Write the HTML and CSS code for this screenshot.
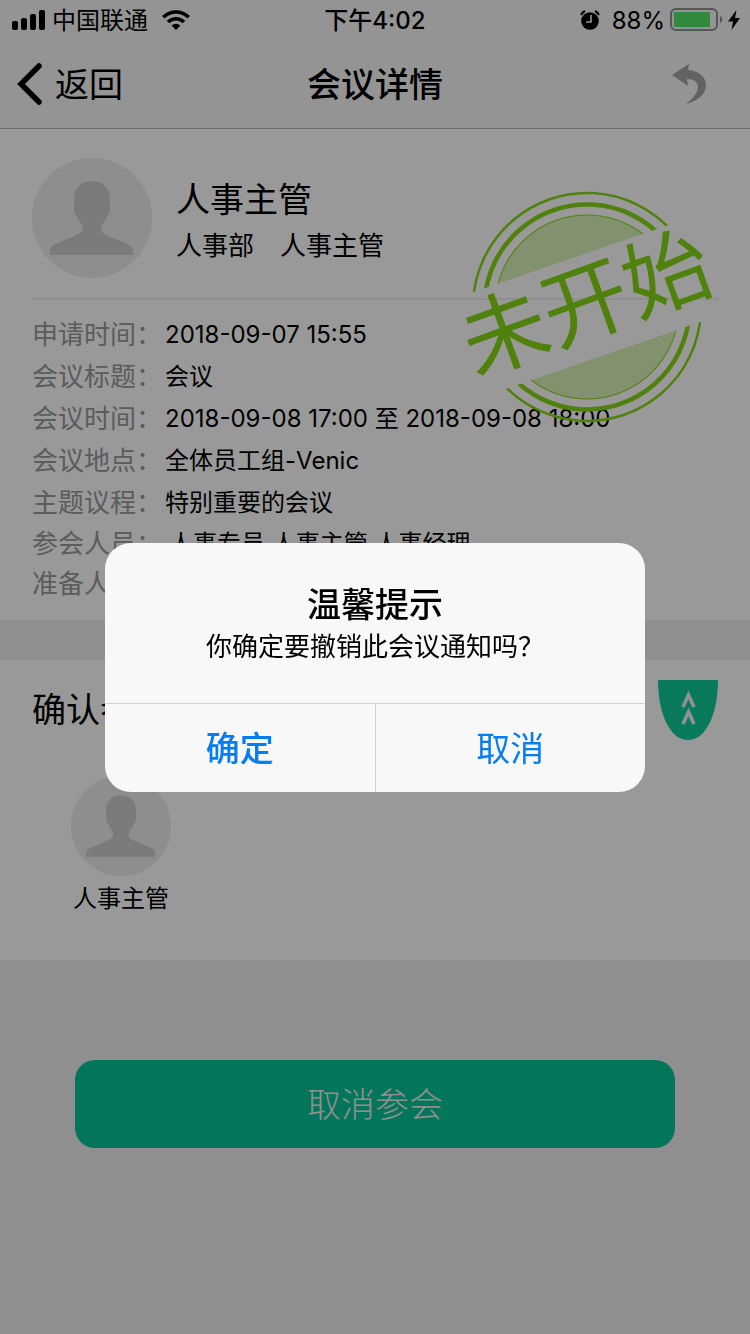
FILE: index.html
```html
<!DOCTYPE html>
<html lang="zh-CN">
<head>
  <meta charset="UTF-8" />
  <meta name="viewport" content="width=device-width, initial-scale=1.0" />
  <title>会议详情</title>
  <link rel="stylesheet" href="styles.css">
</head>
<body>

  <svg width="0" height="0" class="sprite" aria-hidden="true">
    <symbol id="person" viewBox="0 0 120 120">
      <path d="M60 23c11 0 18 7 18 18v10c0 4-1 6-3 7-1 4-3 6-5 9-1 4-1 6 1 8 8 5 20 8 28 13 2 2 2 4 2 9H18c0-5 0-7 2-9 8-5 20-8 28-13 3-2 3-4 2-8-2-3-4-5-5-9-2-1-3-3-3-7V41c0-11 7-18 18-18z" />
    </symbol>
  </svg>

  <div class="status-bar">
    <div class="status-left">
      <svg width="34" height="20" viewBox="0 0 34 20">
        <rect x="0" y="11" width="6" height="9" rx="2" />
        <rect x="9" y="8" width="6" height="12" rx="2" />
        <rect x="18" y="4" width="6" height="16" rx="2" />
        <rect x="27" y="0" width="6" height="20" rx="2" />
      </svg>
      <span class="carrier">中国联通</span>
      <svg width="28" height="20" viewBox="0 0 28 20" fill="none" stroke="#000" stroke-width="3.6">
        <path d="M1.3 7.2a18 18 0 0 1 25.4 0" />
        <path d="M6 12a11.3 11.3 0 0 1 16 0" />
        <path d="M14 20l-4.4-4.5a6.2 6.2 0 0 1 8.8 0z" fill="#000" stroke="none" />
      </svg>
    </div>
    <span class="clock">下午4:02</span>
    <div class="status-right">
      <svg width="20" height="20" viewBox="0 0 20 20">
        <circle cx="10" cy="11" r="8.8" />
        <path d="M1 5A9 9 0 0 1 5 1M15 1a9 9 0 0 1 4 4" fill="none" stroke="#000" stroke-width="2" />
        <path d="M11 5v7H6" fill="none" stroke="#f7f7f7" stroke-width="1.6" />
      </svg>
      <span class="percent">88%</span>
      <svg width="54" height="24" viewBox="0 0 54 24">
        <rect x="1" y="1" width="46" height="21" rx="5" fill="none" stroke="#8f8f8f" stroke-width="2" />
        <rect x="4" y="4" width="36" height="15" rx="1" fill="#52e466" />
        <path d="M50 8c3 1 3 6 0 7z" fill="#8f8f8f" />
      </svg>
      <svg width="12" height="20" viewBox="0 0 12 20"><path d="M8.500 0L0 11.500h5L3.500 20 12 8H7z" /></svg>
    </div>
  </div>

  <header class="nav-bar">
    <button class="back-btn" type="button">
      <svg width="26" height="42" viewBox="0 0 26 42" fill="none" stroke="#000" stroke-width="5.500" stroke-linecap="round" stroke-linejoin="miter">
        <path d="M22 3L4 21l18 18" />
      </svg>
      <span>返回</span>
    </button>
    <h1>会议详情</h1>
    <button class="undo-btn" type="button" aria-label="撤销">
      <svg width="36" height="42" viewBox="0 0 36 42" fill="#a3a3a3">
        <path d="M0 12L17 1l-1 6c11 1 18 7 18 15 0 9-8 16-20 19 7-6 12-11 12-17 0-5-4-8-11-8l1 7z" />
      </svg>
    </button>
  </header>

  <main>
    <section class="detail">
      <div class="profile">
        <div class="avatar"><svg><use href="#person" /></svg></div>
        <div class="profile-text">
          <h2>人事主管</h2>
          <p><span>人事部</span><span>人事主管</span></p>
        </div>
      </div>

      <dl class="info">
        <dt>申请时间：</dt><dd>2018-09-07 15:55</dd>
        <dt>会议标题：</dt><dd>会议</dd>
        <dt>会议时间：</dt><dd>2018-09-08 17:00 至 2018-09-08 18:00</dd>
        <dt>会议地点：</dt><dd>全体员工组-Venic</dd>
        <dt>主题议程：</dt><dd>特别重要的会议</dd>
        <dt class="people">参会人员：</dt><dd class="people">人事专员 人事主管 人事经理</dd>
        <dt class="people">准备人员：</dt><dd class="people"></dd>
      </dl>

      <!-- status stamp -->
      <svg class="stamp" width="300" height="260" viewBox="-150 -130 300 260">
        <defs>
          <clipPath id="band">
            <rect x="-130" y="-130" width="260" height="79" />
            <rect x="-130" y="51" width="260" height="79" />
          </clipPath>
        </defs>
        <g clip-path="url(#band)" transform="rotate(-19)" fill="none" stroke="#84d714">
          <circle r="114" stroke-width="2.500" />
          <circle r="102.500" stroke-width="4.500" />
          <circle r="92" fill="#84d714" fill-opacity="0.3" stroke-width="1" />
        </g>
        <text x="0" y="27" text-anchor="middle" transform="rotate(-20)">未开始</text>
      </svg>
    </section>

    <section class="members">
      <div class="members-head">
        <h2>确认参会</h2>
        <button class="fold-btn" type="button" aria-label="收起">
          <svg width="60" height="60" viewBox="0 0 60 60">
            <path d="M0 0h60C60 34 48 60 30 60S0 34 0 0z" fill="#12cc9b" />
            <path d="M25 27l5.500-12L36 27M25 44l5.500-12L36 44" fill="none" stroke="#f4f4f4" stroke-width="3.500" />
          </svg>
        </button>
      </div>
      <ul class="member-list">
        <li>
          <div class="avatar small"><svg><use href="#person" /></svg></div>
          <span>人事主管</span>
        </li>
      </ul>
    </section>

    <button class="cancel-btn" type="button">取消参会</button>
  </main>

  <div class="overlay">
    <div class="alert" role="alertdialog" aria-labelledby="alertTitle" aria-describedby="alertText">
      <div class="alert-body">
        <h3 id="alertTitle">温馨提示</h3>
        <p id="alertText">你确定要撤销此会议通知吗？</p>
      </div>
      <div class="alert-actions">
        <button class="confirm" type="button">确定</button>
        <button type="button">取消</button>
      </div>
    </div>
  </div>

</body>
</html>
```

FILE: styles.css
```css
* {
  margin: 0;
  padding: 0;
  box-sizing: border-box;
}

body {
  background-color: #efefef;
  min-height: 100vh;
  color: #000;
  font-family: Inter, 'Noto Sans CJK SC', sans-serif;
  font-size: 24px;
}

button {
  border: none;
  background: none;
  font-family: inherit;
  color: inherit;
  cursor: pointer;
}

svg {
  display: block;
}

.sprite {
  position: absolute;
}

/* top bars */
.status-bar {
  display: grid;
  grid-template-columns: 1fr auto 1fr;
  align-items: center;
  height: 40px;
  padding: 0 10px;
  background-color: #f7f7f7;
  line-height: 30px;
}

.status-bar span {
  padding-top: 2px;
}

.status-left,
.status-right {
  display: flex;
  align-items: center;
}

.status-left {
  padding-left: 2px;
}

.status-right {
  justify-content: flex-end;
}

.carrier {
  margin: 0 14px 0 6px;
}

.clock {
  font-weight: 500;
}

.percent {
  margin: 0 5px 0 12px;
}

.status-right svg:last-child {
  margin-left: 4px;
}

.nav-bar {
  display: grid;
  grid-template-columns: 1fr auto 1fr;
  align-items: center;
  height: 89px;
  padding: 0 17px;
  background-color: #f7f7f7;
  border-bottom: 1px solid #b2b2b2;
}

.nav-bar h1 {
  padding-bottom: 4px;
  font-size: 34px;
  font-weight: 500;
}

.back-btn {
  display: flex;
  align-items: center;
  gap: 12px;
  font-size: 34px;
}

.back-btn span {
  padding-bottom: 4px;
}

.undo-btn {
  justify-self: end;
  margin-right: 25px;
}

/* meeting detail */
.detail {
  position: relative;
  padding: 29px 32px 16px;
  background-color: #fff;
}

.profile {
  display: flex;
  gap: 24px;
  padding-bottom: 20px;
  border-bottom: 2px solid #efefef;
}

.avatar {
  width: 120px;
  height: 120px;
  border-radius: 50%;
  background-color: #ededed;
}

.avatar svg {
  width: 100%;
  height: 100%;
  fill: #cdcdcd;
}

.profile-text {
  padding-top: 18px;
}

.profile-text h2 {
  font-size: 34px;
  font-weight: 400;
  line-height: 48px;
}

.profile-text p {
  display: flex;
  gap: 26px;
  font-size: 26px;
  line-height: 44px;
}

.info {
  display: grid;
  grid-template-columns: auto 1fr;
  column-gap: 3px;
  padding-top: 14px;
  line-height: 42px;
}

.info dt {
  font-size: 26px;
  color: #999;
}

.info .people {
  line-height: 40px;
}

.info dd.people {
  padding-left: 4px;
}

.stamp {
  position: absolute;
  top: 48px;
  right: 13px;
}

.stamp text {
  font-family: 'Noto Sans CJK SC', sans-serif;
  font-size: 86px;
  fill: #84d714;
}

/* confirmed members */
.members {
  margin-top: 40px;
  padding: 20px 32px 44px;
  background-color: #fff;
}

.members-head {
  display: flex;
  justify-content: space-between;
}

.members-head h2 {
  font-size: 34px;
  font-weight: 400;
  line-height: 60px;
}

.member-list {
  display: flex;
  padding: 36px 0 0 39px;
  list-style: none;
}

.member-list li {
  display: flex;
  flex-direction: column;
  align-items: center;
  gap: 6px;
  line-height: 34px;
}

.avatar.small {
  width: 100px;
  height: 100px;
}

.cancel-btn {
  display: block;
  width: 80%;
  height: 88px;
  margin: 100px auto 0;
  padding-bottom: 4px;
  border-radius: 20px;
  background-color: #05c396;
  color: #efefef;
  font-size: 34px;
  font-weight: 300;
}

/* alert */
.overlay {
  position: fixed;
  inset: 0;
  display: flex;
  align-items: center;
  justify-content: center;
  background-color: rgba(0, 0, 0, 0.4);
}

.alert {
  width: 72%;
  border-radius: 26px;
  background-color: #f8f8f8;
  text-align: center;
  overflow: hidden;
}

.alert-body {
  padding: 41px 32px 39px;
}

.alert-body h3 {
  font-size: 34px;
  font-weight: 500;
  line-height: 42px;
  margin-bottom: 4px;
}

.alert-body p {
  font-size: 26px;
  line-height: 34px;
}

.alert-actions {
  display: flex;
  border-top: 1px solid #d2d2d5;
}

.alert-actions button {
  flex: 1;
  height: 88px;
  padding-bottom: 2px;
  color: #067df2;
  font-size: 34px;
}

.alert-actions button + button {
  border-left: 1px solid #d2d2d5;
}

.alert-actions .confirm {
  font-weight: 500;
}
```
